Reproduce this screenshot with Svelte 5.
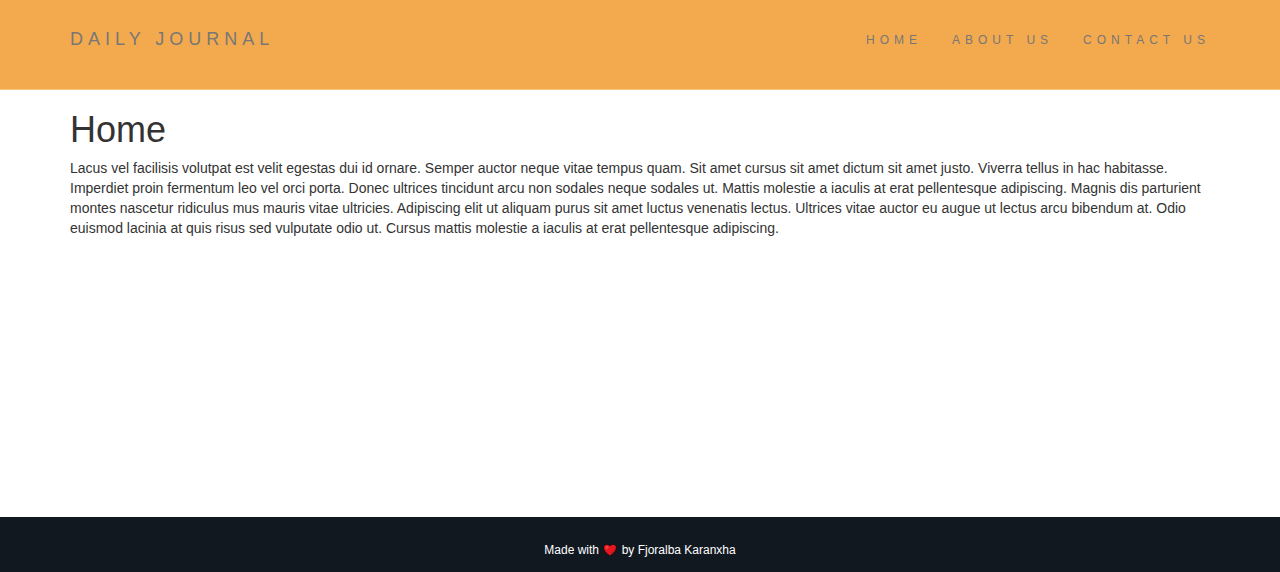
<script>
  const links = ['Home', 'About us', 'Contact us'];
</script>

<div class="page">
  <nav>
    <div class="container bar">
      <a class="brand" href="#home">Daily Journal</a>
      <ul>
        {#each links as label}
          <li><a href="#{label.toLowerCase().replace(' ', '-')}">{label}</a></li>
        {/each}
      </ul>
    </div>
  </nav>
  <main class="container">
    <h1>Home</h1>
    <p>Lacus vel facilisis volutpat est velit egestas dui id ornare. Semper auctor neque vitae tempus quam. Sit amet cursus sit amet dictum sit amet justo. Viverra tellus in hac habitasse. Imperdiet proin fermentum leo vel orci porta. Donec ultrices tincidunt arcu non sodales neque sodales ut. Mattis molestie a iaculis at erat pellentesque adipiscing. Magnis dis parturient montes nascetur ridiculus mus mauris vitae ultricies. Adipiscing elit ut aliquam purus sit amet luctus venenatis lectus. Ultrices vitae auctor eu augue ut lectus arcu bibendum at. Odio euismod lacinia at quis risus sed vulputate odio ut. Cursus mattis molestie a iaculis at erat pellentesque adipiscing.</p>
  </main>
  <footer>
    <p>
      Made with
      <svg viewBox="0 0 16 16" role="img" aria-label="love">
        <path d="M8 14C5 11.500 1.700 9 1.700 5.700C1.700 2 6.200 1.400 8 4.100C9.800 1.400 14.300 2 14.300 5.700C14.300 9 11 11.500 8 14Z" fill="#e8171f" stroke="#060606" stroke-width=".6" />
        <path d="M3.300 6C3 4.500 4.500 3.500 6 4.200L7 5.500L5 7.500Z" fill="#f5403c" />
        <path d="M13.300 6C13 9 10.500 10.700 8 12.900L8 11.500L12 7.500Z" fill="#d0111b" />
      </svg>
      by Fjoralba Karanxha
    </p>
  </footer>
</div>

<style>
  :global(body) {
    margin: 0;
    background: #fff;
  }
  .page {
    display: flex;
    flex-direction: column;
    min-height: 100vh;
    font: 14px/20px "Liberation Sans", Arial, sans-serif;
    color: #333;
  }
  .container {
    box-sizing: border-box;
    width: 100%;
    max-width: 1170px;
    margin: 0 auto;
    padding: 0 15px;
  }
  nav {
    background: #f3aa4e;
    padding: 14px 0 25px;
    border-bottom: 1px solid #f9c880;
    text-transform: uppercase;
  }
  .bar {
    display: flex;
    justify-content: space-between;
    align-items: center;
  }
  nav a {
    color: #777;
    text-decoration: none;
    letter-spacing: 5px;
  }
  .brand {
    font-size: 18px;
    line-height: 50px;
  }
  ul {
    display: flex;
    gap: 30px;
    margin: 0;
    padding: 2px 0 0;
    list-style: none;
    font-size: 12px;
  }
  main {
    flex: 1;
  }
  h1 {
    margin: 20px 0 8px;
    font-size: 36px;
    font-weight: 500;
    line-height: 40px;
  }
  p {
    margin: 0;
  }
  footer {
    background: #11181f;
    color: #fff;
    padding: 23px 0 12px;
    text-align: center;
    font-size: 12px;
  }
  svg {
    width: 16px;
    height: 16px;
    vertical-align: -4px;
  }
</style>
